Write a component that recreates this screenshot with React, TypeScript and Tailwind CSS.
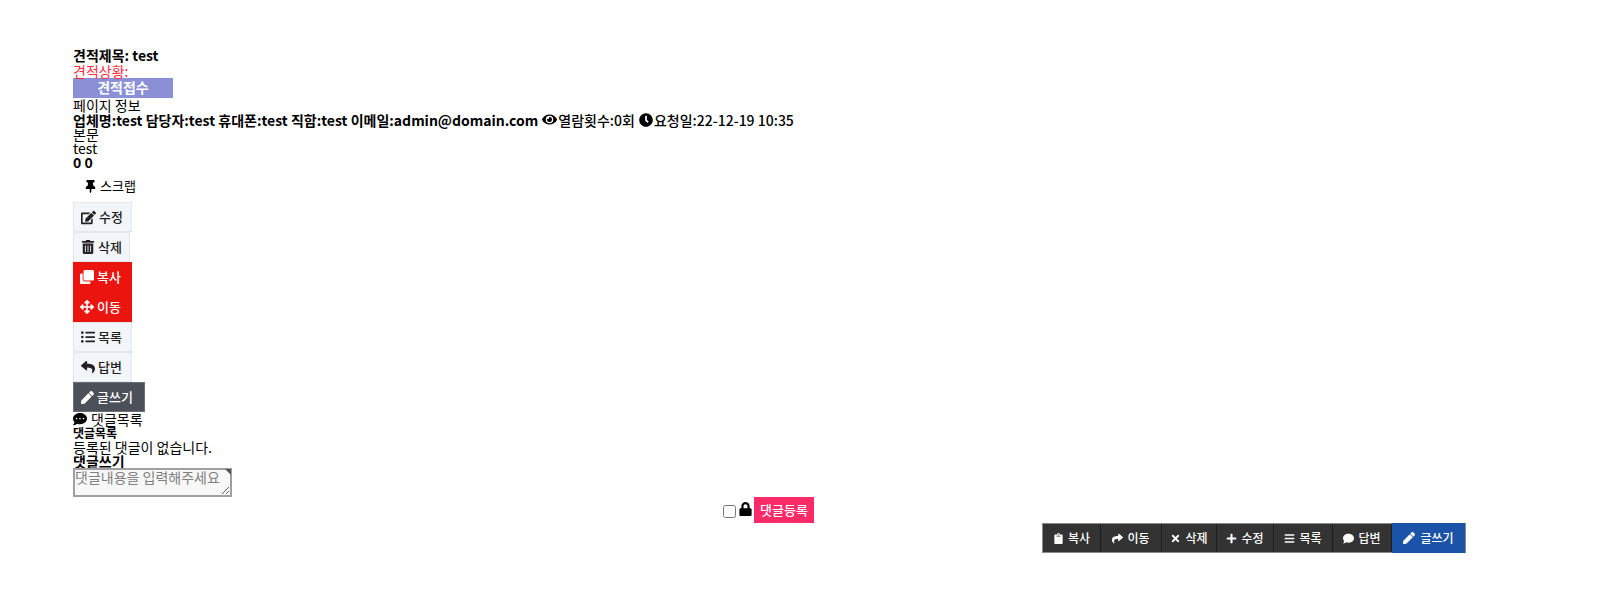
import {
  FaThumbtack,
  FaEdit,
  FaTrashAlt,
  FaClone,
  FaArrowsAlt,
  FaListUl,
  FaReply,
  FaPen,
  FaCommentDots,
  FaLock,
  FaEye,
  FaClock,
  FaClipboard,
  FaShare,
  FaTimes,
  FaPlus,
  FaBars,
  FaComment,
} from "react-icons/fa"

const darkButtons = [
  { label: "복사", Icon: FaClipboard, w: "w-[58px]" },
  { label: "이동", Icon: FaShare, w: "w-[61px]" },
  { label: "삭제", Icon: FaTimes, w: "w-[55px]" },
  { label: "수정", Icon: FaPlus, w: "w-[57px]" },
  { label: "목록", Icon: FaBars, w: "w-[59px]" },
  { label: "답변", Icon: FaComment, w: "w-[59px]" },
]

export default function App() {
  return (
    <div className="min-h-[605px] bg-white pl-[73px] pr-[134px] pt-[48px] font-['Noto_Sans_CJK_KR',sans-serif] text-[14px] leading-[14px] text-black">
      <div className="font-bold">견적제목: test</div>
      <div className="pt-[2px] text-[#ff2b3f]">견적상황:</div>
      <div className="flex h-[20px] w-[100px] items-center justify-center bg-[#8a8fd6] pb-[3px] font-bold text-white">견적접수</div>
      <div>페이지 정보</div>
      <div className="flex items-center gap-[4px] font-bold">
        <span>업체명:test 담당자:test 휴대폰:test 직함:test 이메일:admin@domain.com</span>
        <span className="flex items-center gap-[1px] font-medium"><FaEye className="h-[15px] w-[15px]" />열람횟수:0회</span>
        <span className="flex items-center gap-[1px] font-medium"><FaClock className="h-[14px] w-[14px]" />요청일:22-12-19 10:35</span>
      </div>
      <div>본문</div>
      <div>test</div>
      <div className="font-bold">0 0</div>

      <div className="mt-[2px] flex h-[30px] items-center gap-[4px] pl-[12px] text-[13px]">
        <FaThumbtack className="h-[13px] w-[11px]" />
        스크랩
      </div>

      <div className="mt-[1px] flex flex-col items-start text-[13px] font-medium">
        <div className="flex h-[30px] w-[59px] items-center gap-[3px] border border-[#e4e7ea] bg-[#f2f5fa] pl-[7px] text-[#222]"><FaEdit className="h-[15px] w-[15px]" />수정</div>
        <div className="flex h-[30px] w-[57px] items-center gap-[3px] border border-[#e4e7ea] bg-[#f2f5fa] pl-[7px] text-[#222]"><FaTrashAlt className="h-[14px] w-[14px]" />삭제</div>
        <div className="flex h-[30px] w-[59px] items-center gap-[3px] bg-[#eb140f] pl-[7px] text-white"><FaClone className="h-[14px] w-[14px]" />복사</div>
        <div className="flex h-[30px] w-[59px] items-center gap-[3px] bg-[#eb140f] pl-[7px] text-white"><FaArrowsAlt className="h-[14px] w-[14px]" />이동</div>
        <div className="flex h-[30px] w-[59px] items-center gap-[3px] border border-[#e4e7ea] bg-[#f2f5fa] pl-[7px] text-[#222]"><FaListUl className="h-[14px] w-[14px]" />목록</div>
        <div className="flex h-[30px] w-[59px] items-center gap-[3px] border border-[#e4e7ea] bg-[#f2f5fa] pl-[7px] text-[#222]"><FaReply className="h-[14px] w-[14px]" />답변</div>
        <div className="flex h-[30px] w-[72px] items-center gap-[3px] border border-[#6b7078] bg-[#4b5059] pl-[7px] text-white"><FaPen className="h-[13px] w-[13px]" />글쓰기</div>
      </div>

      <div className="flex h-[14px] items-center gap-[4px]"><FaCommentDots className="h-[14px] w-[14px]" />댓글목록</div>
      <div className="text-[12px] font-bold">댓글목록</div>
      <div>등록된 댓글이 없습니다.</div>
      <div className="font-bold">댓글쓰기</div>
      <div className="relative h-[29px] w-[159px]">
        <textarea
          readOnly
          placeholder="댓글내용을 입력해주세요"
          className="block h-[29px] w-[159px] resize border-2 border-[#a0a0a0] bg-[#f8f8f8] text-[14px] leading-[14px] placeholder:text-[#808080]"
        />
        <div className="absolute right-[1px] top-[1px] h-0 w-0 border-l-[6px] border-t-[6px] border-l-transparent border-t-[#555]" />
      </div>

      <div className="flex h-[26px] items-center justify-center pr-[2px] text-[13px]">
        <input type="checkbox" className="mt-[3px] h-[13px] w-[13px]" />
        <FaLock className="mb-[2px] ml-[3px] h-[14px] w-[13px]" />
        <span className="ml-[2px] flex h-[26px] w-[60px] items-center justify-center bg-[#ff2a68] font-medium text-white">댓글등록</span>
      </div>

      <div className="flex justify-end">
        <div className="flex h-[30px] border border-[#8a8a8a] bg-[#333] text-[12px] font-medium text-white">
          {darkButtons.map(({ label, Icon, w }) => (
            <div key={label} className={`flex ${w} items-center justify-center gap-[4px] border-r border-[#1c1c1c]`}>
              <Icon className="h-[11px] w-[11px]" />
              {label}
            </div>
          ))}
          <div className="-my-px flex w-[73px] items-center justify-center gap-[5px] bg-[#1a53a8]">
            <FaPen className="h-[12px] w-[12px]" />
            글쓰기
          </div>
        </div>
      </div>
    </div>
  )
}
